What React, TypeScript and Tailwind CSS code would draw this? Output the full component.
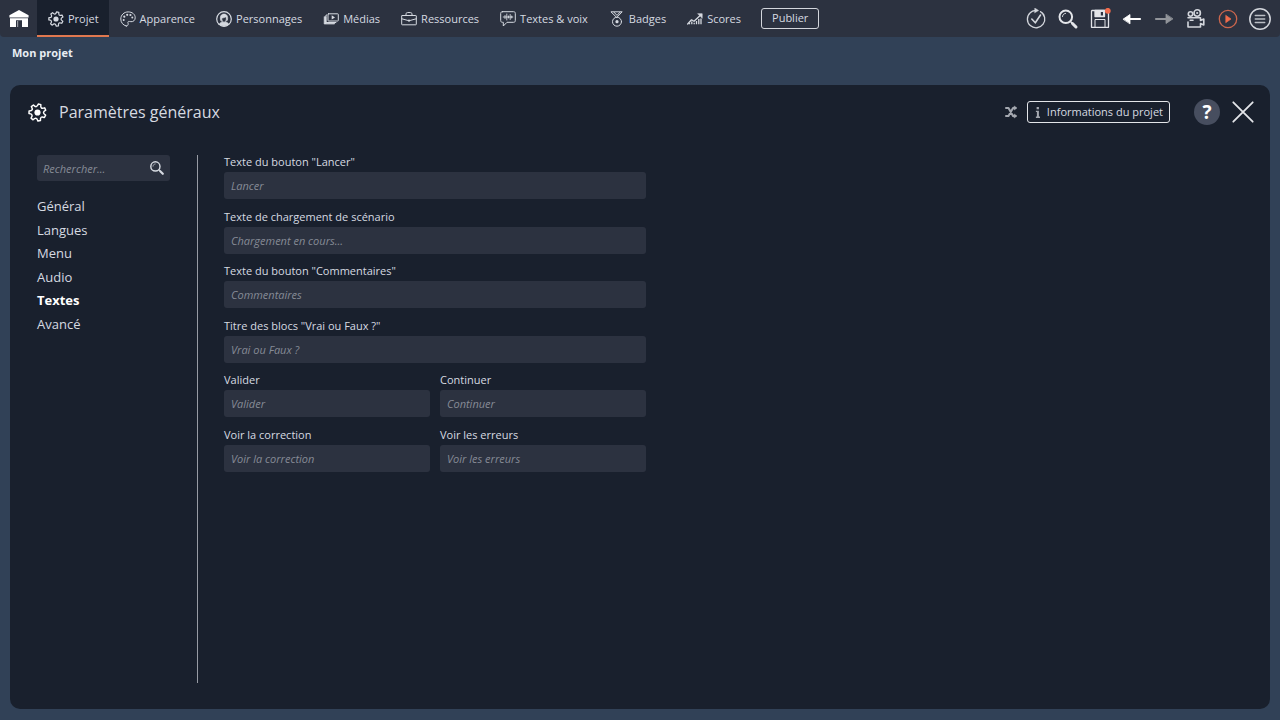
import { useState, type ReactNode } from 'react';

type IconProps = { className?: string };

const line = {
  fill: 'none',
  stroke: 'currentColor',
  strokeLinecap: 'round',
  strokeLinejoin: 'round',
} as const;

function gearPath(teeth: number, outer: number, inner: number) {
  const step = (Math.PI * 2) / teeth;
  const point = (r: number, a: number) => `${(12 + r * Math.sin(a)).toFixed(2)} ${(12 - r * Math.cos(a)).toFixed(2)}`;
  let d = '';
  for (let i = 0; i < teeth; i++) {
    const a = i * step + 0.25;
    d += `${i ? 'L' : 'M'}${point(outer, a - step * 0.17)}L${point(outer, a + step * 0.17)}`;
    d += `Q${point(inner, a + step * 0.3)} ${point(inner, a + step * 0.5)}`;
    d += `Q${point(inner, a + step * 0.7)} ${point(outer, a + step * 0.83)}`;
  }
  return d + 'Z';
}

const GEAR = gearPath(7, 10.8, 7.6);

const GearIcon = ({ className }: IconProps) => (
  <svg viewBox="0 0 24 24" className={className} {...line} strokeWidth="1.9">
    <path d={GEAR} />
    <circle cx="12" cy="12" r="3.9" fill="currentColor" stroke="none" />
  </svg>
);

const HomeIcon = ({ className }: IconProps) => (
  <svg viewBox="0 0 20 18" className={className} fill="currentColor">
    <path d="M10 0 19.6 5.2V7.4H.4V5.2Z" />
    <path d="M1 8.2H19V17H13V10.2H7V17H1Z" />
    <path d="M8 11H9.2V17H8Z" opacity=".5" />
  </svg>
);

const PaletteIcon = ({ className }: IconProps) => (
  <svg viewBox="0 0 16 16" className={className} {...line}>
    <path d="M6.2 15C2.8 14.2.8 11.300.8 8 .8 4 4 .9 8.200.9c4 0 7 2.400 7 5.800 0 2.600-1.900 4.200-4.200 4-1.200-.1-2.100-.6-2.800 0-.8.8.3 1.700-.1 2.900-.3 1-1 1.600-1.900 1.400Z" />
    <g fill="currentColor" stroke="none">
      <circle cx="3.700" cy="9" r="1" />
      <circle cx="4.300" cy="5.700" r="1.100" />
      <circle cx="7.200" cy="3.800" r="1.100" />
      <circle cx="10.400" cy="4" r="1.100" />
      <circle cx="12.300" cy="6.600" r="1" />
    </g>
  </svg>
);

const PersonIcon = ({ className }: IconProps) => (
  <svg viewBox="0 0 16 16" className={className} {...line}>
    <circle cx="8" cy="8" r="7.300" strokeWidth="1.200" />
    <path d="M3.200 13.300C4 11.800 5.300 11.300 6.500 11L8 11.800 9.500 11C10.700 11.300 12 11.800 12.800 13.300 10.200 15.600 5.800 15.600 3.200 13.300Z" fill="currentColor" strokeWidth=".8" />
    <path d="M4.600 9.300C3.700 5.400 5 3 8 3s4.300 2.400 3.400 6.300L10.500 10C10.900 8 10.700 6.800 9.500 6 8.300 6.900 6.800 6.900 5.700 6.900 5.500 8 5.400 9 5.700 10Z" fill="currentColor" strokeWidth=".6" />
    <path d="M5.700 7.500c0 2.300 1 3.700 2.300 3.700s2.400-1.400 2.400-3.700" strokeWidth=".8" />
  </svg>
);

const MediaIcon = ({ className }: IconProps) => (
  <svg viewBox="0 0 16 16" className={className} {...line}>
    <rect x="5" y="2.800" width="10.300" height="7.200" rx=".6" />
    <path d="M8.700 4.300 12 6.400 8.700 8.500Z" fill="currentColor" stroke="none" />
    <path d="M3.500 4H3V11.500H13V11.700" />
    <path d="M1.200 6V13H11.500V12.200H3V6Z" fill="currentColor" strokeWidth=".7" />
  </svg>
);

const CaseIcon = ({ className }: IconProps) => (
  <svg viewBox="0 0 16 16" className={className} {...line}>
    <rect x=".7" y="4.500" width="14.600" height="9.300" rx=".5" />
    <path d="M5 4.300V3C5 1.800 5.800 1.500 8 1.500S11 1.800 11 3V4.300M.8 7.800 7 9.500M15.200 7.800 9 9.500" />
    <rect x="7" y="8.700" width="2" height="1.800" fill="currentColor" stroke="none" />
  </svg>
);

const VoiceIcon = ({ className }: IconProps) => (
  <svg viewBox="0 0 16 16" className={className} {...line}>
    <path d="M2.500.7H13.500C14.700.7 15.300 1.300 15.300 2.400V9.600C15.300 10.700 14.700 11.300 13.500 11.300H7L3.300 15V11.300H2.500C1.300 11.300.7 10.700.7 9.600V2.400C.7 1.300 1.300.7 2.500.7Z" />
    <path d="M3.200 6H12.800M5 4.500V7.500M6.800 3V9M8.500 5V7M10.200 3.500V8.500M11.700 5V7" strokeWidth=".9" />
  </svg>
);

const MedalIcon = ({ className }: IconProps) => (
  <svg viewBox="0 0 16 16" className={className} {...line}>
    <path d="M2.300.8H13.200L8 6.200ZM5 1.200 8 4.400 11 1.200" />
    <circle cx="8" cy="10.700" r="4.500" />
    <circle cx="8" cy="10.700" r="1.600" fill="currentColor" stroke="none" />
  </svg>
);

const ScoreIcon = ({ className }: IconProps) => (
  <svg viewBox="0 0 16 16" className={className} {...line}>
    <path d="M.7 13 4.500 8.800 7 10.300 14 3.700" strokeWidth="1.300" />
    <path d="M11 2.700H15.200V6.900Z" fill="currentColor" strokeWidth=".6" />
    <path d="M2.500 13.300V12M4.800 13.300V10.500M7.200 13.300V11.800M9.500 13.300V10M11.800 13.300V8M14 13.300V7.500" strokeWidth="1.300" strokeLinecap="butt" />
  </svg>
);

const CheckIcon = ({ className }: IconProps) => (
  <svg viewBox="0 0 22 22" className={className} {...line} strokeWidth="1.300">
    <path d="M15.500 3.600A8.700 8.700 0 1 1 5.200 4.700C6.500 3.400 8.200 2.600 10.500 2.500M17.300 4.900 18.500 6.400" />
    <path d="M9.800 0 13.700 2.500 9.800 4.800Z" fill="currentColor" strokeWidth=".4" />
    <path d="m6.800 11 3.500 3.800L15.500 7" strokeWidth="1.600" />
  </svg>
);

const MagnifierIcon = ({ className }: IconProps) => (
  <svg viewBox="0 0 22 22" className={className} {...line}>
    <circle cx="8.800" cy="8.800" r="6.300" strokeWidth="2" />
    <path d="M5.500 8.500C5.700 6.700 6.800 5.600 8.500 5.400" strokeWidth="1" />
    <path d="m13.500 13.500 1.500 1.500" strokeWidth="1.500" />
    <path d="m15.500 15.500 3.500 3.500" strokeWidth="3" />
  </svg>
);

const SaveIcon = ({ className }: IconProps) => (
  <svg viewBox="0 0 22 22" className={className} {...line} strokeWidth="1.300">
    <path d="M3 2.500H17L19.500 5V19.300H2.500V3Z" />
    <path d="M6 2.500H15.500V8.500H6Z" fill="currentColor" />
    <path d="M11.800 4H14V7.500H11.800Z" fill="#2c3240" stroke="none" />
    <path d="M6 19V11.500H16V19" strokeWidth="1" />
    <circle cx="18.800" cy="2.800" r="2.900" fill="#f26b4b" stroke="none" />
  </svg>
);

const ArrowIcon = ({ className }: IconProps) => (
  <svg viewBox="0 0 22 22" className={className} {...line}>
    <path d="M8 11H19" strokeWidth="2.200" />
    <path d="M2.300 11 9 6.500V15.500Z" fill="currentColor" strokeWidth=".8" />
  </svg>
);

const CameraIcon = ({ className }: IconProps) => (
  <svg viewBox="0 0 22 22" className={className} {...line} strokeWidth="1.600">
    <circle cx="5.500" cy="6" r="2.200" />
    <circle cx="12.200" cy="5" r="3.200" />
    <circle cx="12.200" cy="5" r="1.100" fill="currentColor" stroke="none" />
    <path d="M3 9.800H15.500V12.500L18.800 11V17L15.500 15.500V19H3V14M5.200 12.300H8" />
  </svg>
);

const PlayIcon = ({ className }: IconProps) => (
  <svg viewBox="0 0 22 22" className={className} {...line} strokeWidth="1.300">
    <circle cx="11" cy="11" r="8.700" />
    <path d="M9 7.500 14 11 9 14.500Z" fill="#f26b4b" stroke="#f26b4b" strokeWidth=".7" />
  </svg>
);

const MenuIcon = ({ className }: IconProps) => (
  <svg viewBox="0 0 22 22" className={className} {...line} strokeWidth="1.500">
    <circle cx="11" cy="11" r="10.200" />
    <path d="M6.300 7.500H15.700M6.300 11H15.700M6.300 14.500H15.700" opacity=".85" />
  </svg>
);

const ShuffleIcon = ({ className }: IconProps) => (
  <svg viewBox="0 0 14 14" className={className} {...line} strokeWidth="2">
    <path d="M2 3H4.500L9 11H11.500M2 11H4.500L9 3H11.500" />
    <path d="M10.500 1.300 12.700 3 10.500 4.700ZM10.500 9.300 12.700 11 10.500 12.700Z" fill="currentColor" strokeWidth=".8" />
  </svg>
);

const InfoIcon = ({ className }: IconProps) => (
  <svg viewBox="0 0 6 12" className={className} fill="currentColor">
    <rect x="1.500" y="0" width="2.500" height="2.500" />
    <path d="M.7 4H4V10.300H5.200V12H.7V10.300H1.800V5.500H.7Z" />
  </svg>
);

const CloseIcon = ({ className }: IconProps) => (
  <svg viewBox="0 0 22 22" className={className} {...line} strokeWidth="1.800">
    <path d="M1.300 1.300 20.700 20.700M20.700 1.300 1.300 20.700" />
  </svg>
);

const tabs: { label: string; icon: (p: IconProps) => ReactNode }[] = [
  { label: 'Projet', icon: GearIcon },
  { label: 'Apparence', icon: PaletteIcon },
  { label: 'Personnages', icon: PersonIcon },
  { label: 'Médias', icon: MediaIcon },
  { label: 'Ressources', icon: CaseIcon },
  { label: 'Textes & voix', icon: VoiceIcon },
  { label: 'Badges', icon: MedalIcon },
  { label: 'Scores', icon: ScoreIcon },
];

const tools: { label: string; icon: (p: IconProps) => ReactNode; look: string }[] = [
  { label: 'Vérifier', icon: CheckIcon, look: 'text-[#d3d6dc]' },
  { label: 'Rechercher', icon: MagnifierIcon, look: 'text-[#e3e5e9]' },
  { label: 'Enregistrer', icon: SaveIcon, look: 'text-[#e3e5e9]' },
  { label: 'Annuler', icon: ArrowIcon, look: 'text-white' },
  { label: 'Rétablir', icon: ArrowIcon, look: 'rotate-180 text-[#92959b]' },
  { label: 'Capture', icon: CameraIcon, look: 'text-[#d3d6dc]' },
  { label: 'Lancer', icon: PlayIcon, look: 'text-[#cb664d]' },
  { label: 'Menu', icon: MenuIcon, look: 'text-[#d3d6dc]' },
];

const sections = ['Général', 'Langues', 'Menu', 'Audio', 'Textes', 'Avancé'];

const fields = [
  { id: 'launch', label: 'Texte du bouton "Lancer"', hint: 'Lancer', wide: true },
  { id: 'loading', label: 'Texte de chargement de scénario', hint: 'Chargement en cours...', wide: true },
  { id: 'comments', label: 'Texte du bouton "Commentaires"', hint: 'Commentaires', wide: true },
  { id: 'truefalse', label: 'Titre des blocs "Vrai ou Faux ?"', hint: 'Vrai ou Faux ?', wide: true },
  { id: 'validate', label: 'Valider', hint: 'Valider', wide: false },
  { id: 'continue', label: 'Continuer', hint: 'Continuer', wide: false },
  { id: 'correction', label: 'Voir la correction', hint: 'Voir la correction', wide: false },
  { id: 'errors', label: 'Voir les erreurs', hint: 'Voir les erreurs', wide: false },
];

function TopBar() {
  return (
    <header className="flex h-[37px] items-stretch rounded-b bg-[#2c3240] text-[11px]">
      <a href="#accueil" aria-label="Accueil" className="flex w-[37px] items-center justify-center text-white">
        <HomeIcon className="h-[18px] w-5" />
      </a>
      <nav className="flex">
        {tabs.map(({ label, icon: Icon }, i) => (
          <a
            key={label}
            href="#"
            aria-current={i === 0 ? 'page' : undefined}
            className={
              i === 0
                ? 'flex items-center gap-1 border-b-2 border-[#e0784f] bg-[#19202d] pt-[2px] pr-[10px] pl-[11px]'
                : 'flex items-center gap-1 pr-[10px] pl-[11px]'
            }
          >
            <Icon className="size-4" />
            <span className="pt-px whitespace-nowrap">{label}</span>
          </a>
        ))}
      </nav>
      <button type="button" className="ml-[10px] h-[21px] self-center rounded-[3px] border border-[#d3d6dc] px-[10px]">
        Publier
      </button>
      <div className="ml-auto flex items-center pr-1">
        {tools.map(({ label, icon: Icon, look }) => (
          <button key={label} type="button" aria-label={label} className="flex w-8 justify-center">
            <span className={look}>
              <Icon className="size-[22px]" />
            </span>
          </button>
        ))}
      </div>
    </header>
  );
}

export default function App() {
  const [section, setSection] = useState('Textes');

  return (
    <div className="flex min-h-screen flex-col bg-[#314157] font-['Open_Sans','Noto_Sans',sans-serif] text-[11px] text-[#d6dae1]">
      <TopBar />
      <h1 className="px-3 pt-2 leading-4 font-bold text-[#e8edf3]">Mon projet</h1>
      <main className="mx-[10px] mt-6 mb-[11px] flex grow flex-col rounded-[10px] bg-[#19202d] pb-[26px]">
        <div className="flex h-[54px] items-center pr-4 pl-[18px]">
          <GearIcon className="size-[19px] text-white" />
          <h2 className="ml-3 text-[16px]">Paramètres généraux</h2>
          <div className="ml-auto flex items-center">
            <ShuffleIcon className="size-[14px] text-[#a4a8b0]" />
            <button
              type="button"
              className="ml-[9px] flex h-[22px] items-center gap-[6px] rounded-[3px] border border-[#e3e5e9] pr-[6px] pl-[7px]"
            >
              <InfoIcon className="h-[11px] w-[6px] text-[#a4a8b0]" />
              Informations du projet
            </button>
            <button
              type="button"
              aria-label="Aide"
              className="ml-6 flex size-[26px] items-center justify-center rounded-full bg-[#474e5f] text-[19px] leading-none font-bold text-white"
            >
              ?
            </button>
            <button type="button" aria-label="Fermer" className="ml-3 text-[#e3e5e9]">
              <CloseIcon className="size-[22px]" />
            </button>
          </div>
        </div>
        <div className="mt-4 flex grow pl-[27px]">
          <aside className="w-[133px] shrink-0">
            <div className="flex h-[26px] items-center rounded-[3px] bg-[#2c3240] pr-[5px]">
              <input
                type="text"
                aria-label="Rechercher"
                placeholder="Rechercher..."
                className="h-[26px] min-w-0 grow bg-transparent pl-[6px] outline-none placeholder:text-[#868b96] placeholder:italic"
              />
              <MagnifierIcon className="size-4 shrink-0" />
            </div>
            <nav className="mt-[14px] grid h-[141px] auto-rows-fr text-[13px]">
              {sections.map((name) => (
                <button
                  key={name}
                  type="button"
                  onClick={() => setSection(name)}
                  className={name === section ? 'text-left font-bold text-white' : 'text-left'}
                >
                  {name}
                </button>
              ))}
            </nav>
          </aside>
          <form className="ml-[27px] grow border-l border-[#979ba4] pl-[26px]">
            <div className="grid h-[327px] w-full max-w-[422px] auto-rows-fr grid-cols-2 gap-x-[10px]">
              {fields.map((f) => (
                <div key={f.id} className={f.wide ? 'col-span-2' : ''}>
                  <label htmlFor={f.id} className="block h-[17px] leading-[13px]">
                    {f.label}
                  </label>
                  <input
                    id={f.id}
                    type="text"
                    placeholder={f.hint}
                    className="block h-[27px] w-full rounded-[3px] bg-[#2c3240] px-[7px] outline-none placeholder:text-[#868b96] placeholder:italic"
                  />
                </div>
              ))}
            </div>
          </form>
        </div>
      </main>
    </div>
  );
}
